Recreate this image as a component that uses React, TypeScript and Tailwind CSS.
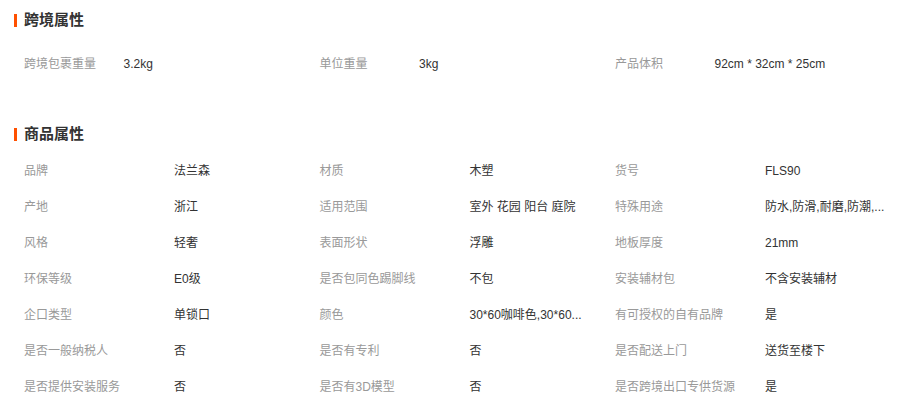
import React from 'react';

type Attr = [string, string];

const crossBorder: Attr[] = [
    ['跨境包裹重量', '3.2kg'],
    ['单位重量', '3kg'],
    ['产品体积', '92cm * 32cm * 25cm'],
];

// long values are shown already shortened, as on the page
const product: Attr[] = [
    ['品牌', '法兰森'],
    ['材质', '木塑'],
    ['货号', 'FLS90'],
    ['产地', '浙江'],
    ['适用范围', '室外 花园 阳台 庭院'],
    ['特殊用途', '防水,防滑,耐磨,防潮,...'],
    ['风格', '轻奢'],
    ['表面形状', '浮雕'],
    ['地板厚度', '21mm'],
    ['环保等级', 'E0级'],
    ['是否包同色踢脚线', '不包'],
    ['安装辅材包', '不含安装辅材'],
    ['企口类型', '单锁口'],
    ['颜色', '30*60咖啡色,30*60...'],
    ['有可授权的自有品牌', '是'],
    ['是否一般纳税人', '否'],
    ['是否有专利', '否'],
    ['是否配送上门', '送货至楼下'],
    ['是否提供安装服务', '否'],
    ['是否有3D模型', '否'],
    ['是否跨境出口专供货源', '是'],
];

const SectionTitle: React.FC<{ title: string; className?: string }> = ({ title, className }) => (
    <div className={`flex items-center pl-[14px] ${className ?? ''}`}>
        <span className="w-[3px] h-[13px] bg-[#ff5000] mr-[7px]" />
        <h2 className="text-[15px] font-bold text-[#333]">{title}</h2>
    </div>
);

const AttrGrid: React.FC<{ items: Attr[]; labelWidth: string }> = ({ items, labelWidth }) => (
    <div className="grid grid-cols-[295.5px_295.5px_295.5px] pl-[24px]">
        {items.map(([label, value]) => (
            <div key={label} className="flex items-center h-9 text-[12px]">
                <span className={`${labelWidth} shrink-0 text-[#999]`}>{label}</span>
                <span className="whitespace-nowrap text-[#333]">{value}</span>
            </div>
        ))}
    </div>
);

export default function App() {
    return (
        <div
            className="w-[902px] h-[409px] bg-white overflow-hidden"
            style={{ fontFamily: '"Liberation Sans", "Noto Sans CJK SC", sans-serif' }}
        >
            {/* 跨境属性 */}
            <SectionTitle title="跨境属性" className="h-10" />
            <div className="pt-[6px] mb-[33px]">
                <AttrGrid items={crossBorder} labelWidth="w-[99.5px]" />
            </div>

            {/* 商品属性 */}
            <SectionTitle title="商品属性" className="h-[38px]" />
            <AttrGrid items={product} labelWidth="w-[150px]" />
        </div>
    );
}
